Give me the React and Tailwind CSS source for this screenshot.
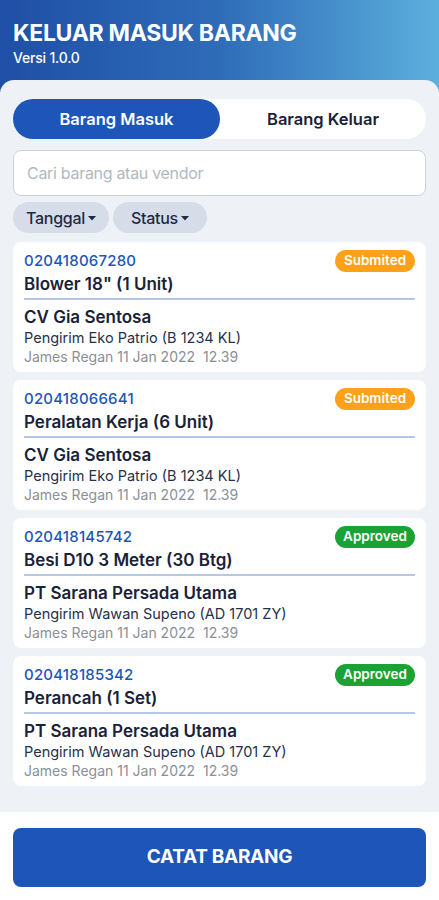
import React from "react";

const items = [
  { id: "020418067280", title: 'Blower 18" (1 Unit)', vendor: "CV Gia Sentosa", sender: "Pengirim Eko Patrio (B 1234 KL)", status: "Submited" },
  { id: "020418066641", title: "Peralatan Kerja (6 Unit)", vendor: "CV Gia Sentosa", sender: "Pengirim Eko Patrio (B 1234 KL)", status: "Submited" },
  { id: "020418145742", title: "Besi D10 3 Meter (30 Btg)", vendor: "PT Sarana Persada Utama", sender: "Pengirim Wawan Supeno (AD 1701 ZY)", status: "Approved" },
  { id: "020418185342", title: "Perancah (1 Set)", vendor: "PT Sarana Persada Utama", sender: "Pengirim Wawan Supeno (AD 1701 ZY)", status: "Approved" },
];

function Caret() {
  return (
    <svg width="8" height="5" viewBox="0 0 8 5" className="ml-[3px] mt-[1px]">
      <path d="M0 0 L8 0 L4 4.5 Z" fill="#1f2a44" />
    </svg>
  );
}

export default function App() {
  return (
    <div className="w-[439px] h-[900px] bg-white flex flex-col overflow-hidden" style={{ fontFamily: "Inter, 'Noto Sans', sans-serif" }}>
      <div className="h-[92px] shrink-0 bg-gradient-to-r from-[#1f4fa6] via-[#2f6cb8] to-[#5dafdc] px-[13px] pt-[19px]">
        <div className="text-white text-[23px] font-bold leading-[28px] tracking-[-0.3px]">KELUAR MASUK BARANG</div>
        <div className="text-white text-[14px] font-medium leading-[20px] tracking-[-0.2px] mt-[1px]">Versi 1.0.0</div>
      </div>
      <div className="-mt-[12px] bg-[#eef1f5] rounded-t-[14px] h-[732px] shrink-0 px-[13px] pt-[19px] flex flex-col">
        <div className="h-[40px] bg-white rounded-full flex">
          <div className="w-[207px] bg-[#1d56b8] rounded-full flex items-center justify-center text-white text-[16.5px] font-semibold">Barang Masuk</div>
          <div className="flex-1 flex items-center justify-center text-[#1a2238] text-[16.5px] font-semibold">Barang Keluar</div>
        </div>
        <div className="mt-[11px] h-[46px] bg-white rounded-[8px] border border-[#cdd3dc] flex items-center px-[13px] text-[16px] text-[#b3b8c0] tracking-[-0.3px]">Cari barang atau vendor</div>
        <div className="mt-[6px] flex gap-[4px]">
          <div className="h-[31px] w-[96px] bg-[#d6dde8] rounded-full flex items-center justify-center text-[16px] text-[#1f2a44] font-medium tracking-[-0.3px]">Tanggal<Caret /></div>
          <div className="h-[31px] w-[94px] bg-[#d6dde8] rounded-full flex items-center justify-center text-[16px] text-[#1f2a44] font-medium tracking-[-0.3px]">Status<Caret /></div>
        </div>
        <div className="mt-[9px] flex flex-col gap-[8px]">
          {items.map((it) => (
            <div key={it.id} className="h-[130px] bg-white rounded-[8px] px-[11px] pt-[7px]">
              <div className="flex items-center justify-between">
                <div className="text-[#1d56b8] text-[15px] font-medium tracking-[0.2px] leading-[22px] mt-[1px]">{it.id}</div>
                <div className={`h-[22px] w-[80px] rounded-full flex items-center justify-center text-white text-[13.5px] font-semibold ${it.status === "Approved" ? "bg-[#1aa334]" : "bg-[#fca119]"}`}>{it.status}</div>
              </div>
              <div className="text-[#1a2238] text-[17px] font-semibold leading-[22px] mt-[1px]">{it.title}</div>
              <div className="h-[2px] bg-[#b7c8e6] mt-[3px] mb-[6px]" />
              <div className="text-[#1a2238] text-[17px] font-semibold leading-[22px]">{it.vendor}</div>
              <div className="text-[#27304a] text-[14.5px] leading-[19px]">{it.sender}</div>
              <div className="text-[#8a8f98] text-[14px] leading-[19px]">James Regan 11 Jan 2022&nbsp; 12.39</div>
            </div>
          ))}
        </div>
      </div>
      <div className="px-[13px] pt-[16px]">
        <div className="h-[59px] bg-[#1d56b8] rounded-[8px] flex items-center justify-center text-white text-[19px] font-bold tracking-[-0.3px]">CATAT BARANG</div>
      </div>
    </div>
  );
}
